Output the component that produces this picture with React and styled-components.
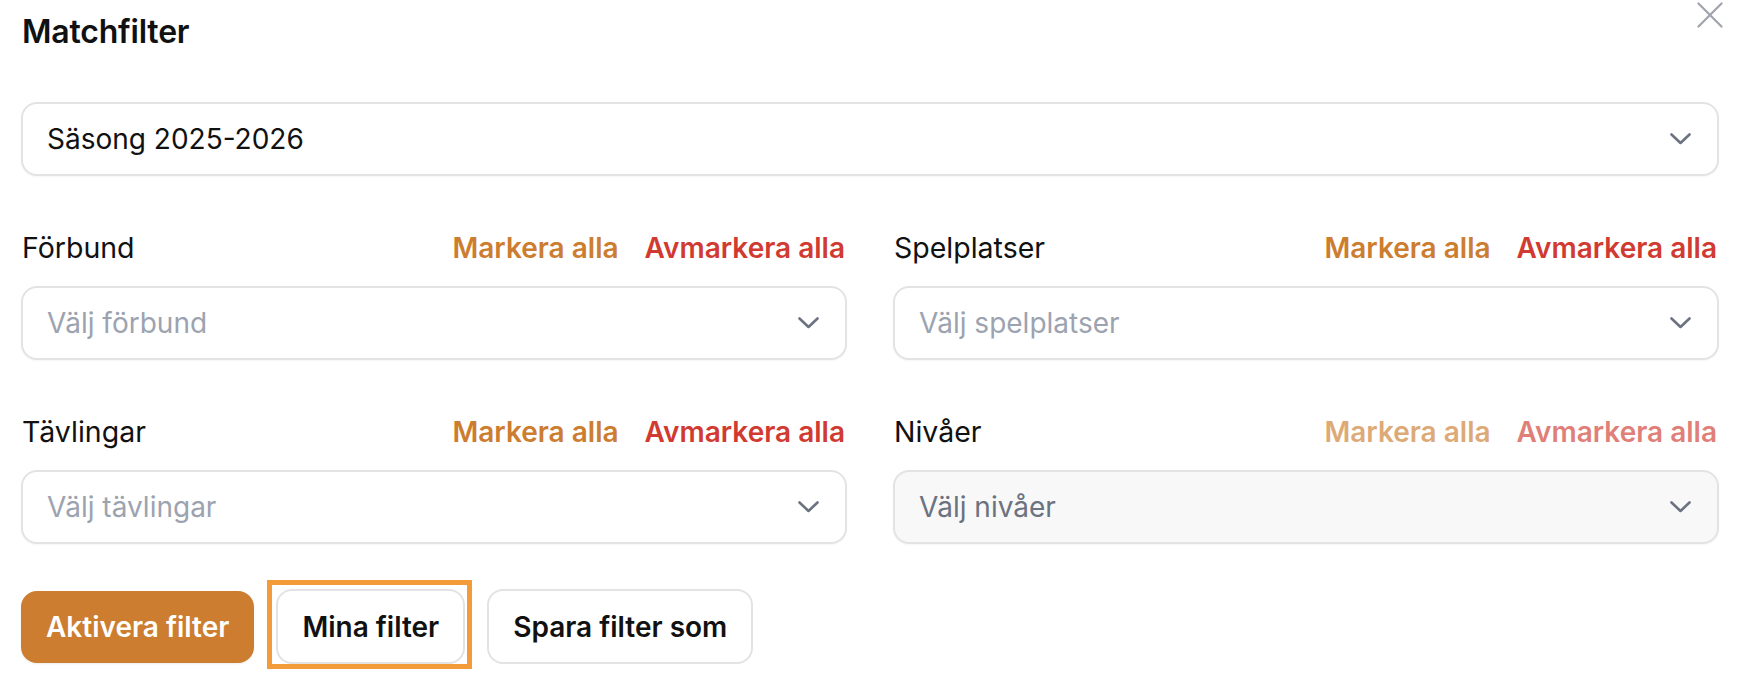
import React from "react";
import styled, { createGlobalStyle, css } from "styled-components";

const Global = createGlobalStyle`
  html, body { margin: 0; padding: 0; background: #ffffff; }
  body { font-family: Inter, "Noto Sans", "Liberation Sans", sans-serif; color: #111111; }
  * { box-sizing: border-box; }
`;

const Page = styled.div`
  min-height: 100vh;
  padding: 2px 21px 0 21px;
  display: flex;
  flex-direction: column;
`;

const Header = styled.header`
  display: flex;
  justify-content: space-between;
  align-items: flex-start;
`;

const Title = styled.h1`
  margin: 10px 0 0 1px;
  font-size: 32px;
  line-height: 40px;
  font-weight: 600;
  color: #111111;
  letter-spacing: -0.2px;
`;

const CloseButton = styled.button`
  border: 0;
  background: transparent;
  padding: 0;
  margin-right: -4px;
  width: 26px;
  height: 26px;
  display: flex;
  cursor: pointer;
`;

const SelectBox = styled.div`
  height: 74px;
  border: 2px solid #e3e3e3;
  border-radius: 16px;
  box-shadow: 0 1px 2px rgba(0, 0, 0, 0.04);
  background: ${(p) => (p.$disabled ? "#f8f8f8" : "#ffffff")};
  display: flex;
  align-items: center;
  justify-content: space-between;
  padding: 0 26px 0 24px;
  font-size: 28px;
  color: ${(p) => (p.$placeholder ? (p.$disabled ? "#6b7280" : "#9ca3af") : "#111111")};
`;

const SeasonSelect = styled(SelectBox)`
  margin-top: 50px;
`;

const Grid = styled.div`
  margin-top: 56px;
  display: grid;
  grid-template-columns: 1fr 1fr;
  column-gap: 46px;
  row-gap: 56px;
`;

const Field = styled.div`
  display: flex;
  flex-direction: column;
  gap: 22px;
`;

const LabelRow = styled.div`
  display: flex;
  align-items: center;
  justify-content: space-between;
  height: 32px;
`;

const Label = styled.span`
  font-size: 28.5px;
  line-height: 32px;
  color: #111111;
  padding-left: 1px;
`;

const Actions = styled.div`
  display: flex;
  gap: 26px;
  padding-right: 2px;
  opacity: ${(p) => (p.$disabled ? 0.65 : 1)};
`;

const LinkButton = styled.span`
  font-size: 28px;
  line-height: 32px;
  font-weight: 600;
  color: ${(p) => (p.$tone === "danger" ? "#d13a31" : "#cc7d30")};
`;

const ButtonRow = styled.div`
  margin-top: 45px;
  display: flex;
  gap: 22px;
  align-items: center;
`;

const FocusRing = styled.div`
  display: flex;
  border: 5px solid #f29b38;
  padding: 4px 2px 0 4px;
  margin: -9px -7px -5px -9px;
`;

const Button = styled.button`
  height: 75px;
  border-radius: 16px;
  padding: 0 24px;
  font-family: inherit;
  font-size: 28px;
  font-weight: 600;
  cursor: pointer;
  ${(p) =>
    p.$primary
      ? css`
          background: #cc7d30;
          color: #ffffff;
          border: 2px solid #cc7d30;
          height: 72px;
          padding: 0 23px;
          box-shadow: 0 1px 2px rgba(0, 0, 0, 0.08);
        `
      : css`
          background: #ffffff;
          color: #111111;
          border: 2px solid #e3e3e3;
        `}
`;

const Chevron = () => (
  <svg width="21" height="12" viewBox="0 0 21 12" fill="none">
    <polyline
      points="1.5,1.5 10.5,10 19.5,1.5"
      stroke="#6b7280"
      strokeWidth="2.6"
      strokeLinecap="round"
      strokeLinejoin="round"
    />
  </svg>
);

const CloseIcon = () => (
  <svg width="26" height="26" viewBox="0 0 26 26" fill="none">
    <path d="M1.5 1.5 L24.5 24.5 M24.5 1.5 L1.5 24.5" stroke="#a0a3ab" strokeWidth="2.2" strokeLinecap="round" />
  </svg>
);

const fields = [
  { label: "Förbund", placeholder: "Välj förbund" },
  { label: "Spelplatser", placeholder: "Välj spelplatser" },
  { label: "Tävlingar", placeholder: "Välj tävlingar" },
  { label: "Nivåer", placeholder: "Välj nivåer", disabled: true },
];

export default function App() {
  return (
    <>
      <Global />
      <Page>
        <Header>
          <Title>Matchfilter</Title>
          <CloseButton aria-label="Stäng">
            <CloseIcon />
          </CloseButton>
        </Header>
        <SeasonSelect>
          <span>Säsong 2025-2026</span>
          <Chevron />
        </SeasonSelect>
        <Grid>
          {fields.map((f) => (
            <Field key={f.label}>
              <LabelRow>
                <Label>{f.label}</Label>
                <Actions $disabled={f.disabled}>
                  <LinkButton>Markera alla</LinkButton>
                  <LinkButton $tone="danger">Avmarkera alla</LinkButton>
                </Actions>
              </LabelRow>
              <SelectBox $placeholder $disabled={f.disabled}>
                <span>{f.placeholder}</span>
                <Chevron />
              </SelectBox>
            </Field>
          ))}
        </Grid>
        <ButtonRow>
          <Button $primary>Aktivera filter</Button>
          <FocusRing>
            <Button>Mina filter</Button>
          </FocusRing>
          <Button>Spara filter som</Button>
        </ButtonRow>
      </Page>
    </>
  );
}
